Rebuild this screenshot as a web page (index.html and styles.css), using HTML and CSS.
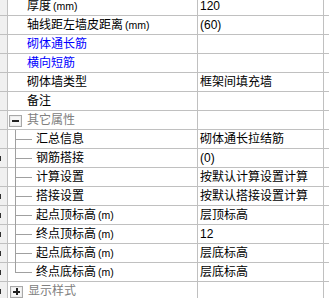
FILE: index.html
```html
<!DOCTYPE html>
<html lang="zh">
<head>
<meta charset="utf-8">
<link rel="stylesheet" href="styles.css">
</head>
<body>
<div class="grid">
  <div class="row first"><div class="strip"></div><div class="name">厚度<span class="unit">(mm)</span></div><div class="val">120</div><div class="tail"></div></div>
  <div class="row"><div class="strip"></div><div class="name">轴线距左墙皮距离<span class="unit">(mm)</span></div><div class="val">(60)</div><div class="tail"></div></div>
  <div class="row"><div class="strip"></div><div class="name blue">砌体通长筋</div><div class="val"></div><div class="tail"></div></div>
  <div class="row"><div class="strip"></div><div class="name blue">横向短筋</div><div class="val"></div><div class="tail"></div></div>
  <div class="row"><div class="strip"></div><div class="name">砌体墙类型</div><div class="val">框架间填充墙</div><div class="tail"></div></div>
  <div class="row"><div class="strip"></div><div class="name">备注</div><div class="val"></div><div class="tail"></div></div>
  <div class="row"><div class="strip"></div><div class="name group"><span class="box"><span class="minus"></span></span><span class="gtext">其它属性</span></div><div class="val"></div><div class="tail"></div></div>
  <div class="row"><div class="strip"></div><div class="name child"><span class="branch"><span class="up"></span><span class="down"></span></span>汇总信息</div><div class="val">砌体通长拉结筋</div><div class="tail"></div></div>
  <div class="row"><div class="strip"><span class="mk"></span></div><div class="name child"><span class="branch"><span class="up"></span><span class="down"></span></span>钢筋搭接</div><div class="val">(0)</div><div class="tail"></div></div>
  <div class="row"><div class="strip"></div><div class="name child"><span class="branch"><span class="up"></span><span class="down"></span></span>计算设置</div><div class="val">按默认计算设置计算</div><div class="tail"></div></div>
  <div class="row"><div class="strip"><span class="mk"></span></div><div class="name child"><span class="branch"><span class="up"></span><span class="down"></span></span>搭接设置</div><div class="val">按默认搭接设置计算</div><div class="tail"></div></div>
  <div class="row"><div class="strip"><span class="mk"></span></div><div class="name child"><span class="branch"><span class="up"></span><span class="down"></span></span>起点顶标高<span class="unit">(m)</span></div><div class="val">层顶标高</div><div class="tail"></div></div>
  <div class="row"><div class="strip"><span class="mk"></span></div><div class="name child"><span class="branch"><span class="up"></span><span class="down"></span></span>终点顶标高<span class="unit">(m)</span></div><div class="val">12</div><div class="tail"></div></div>
  <div class="row"><div class="strip"><span class="mk"></span></div><div class="name child"><span class="branch"><span class="up"></span><span class="down"></span></span>起点底标高<span class="unit">(m)</span></div><div class="val">层底标高</div><div class="tail"></div></div>
  <div class="row"><div class="strip"><span class="mk"></span></div><div class="name child"><span class="branch"><span class="up"></span><span class="down last"></span></span>终点底标高<span class="unit">(m)</span></div><div class="val">层底标高</div><div class="tail"></div></div>
  <div class="row"><div class="strip"><span class="mk"></span></div><div class="name group plusrow"><span class="box"><span class="minus"></span><span class="vbar"></span></span><span class="gtext">显示样式</span></div><div class="val"></div><div class="tail"></div></div>
</div>
</body>
</html>
```
FILE: styles.css
```css
html, body {
  margin: 0;
  padding: 0;
  background: #ffffff;
}
body {
  width: 329px;
  height: 298px;
  overflow: hidden;
  font-family: "Liberation Sans", "Noto Sans CJK SC", sans-serif;
  font-size: 12px;
  color: #000000;
}
.grid {
  display: flex;
  flex-direction: column;
  margin-top: -3px;
}
.row {
  display: flex;
  height: 18px;
  border-bottom: 1px solid #c0c0c0;
}
.strip {
  width: 7px;
  background: #f0f0f0;
  border-right: 1px solid #c0c0c0;
  display: flex;
  align-items: center;
}
.mk {
  width: 1px;
  height: 5px;
  background: #303030;
}
.name {
  width: 170px;
  padding-left: 19px;
  border-right: 1px solid #c0c0c0;
  display: flex;
  align-items: center;
  line-height: 18px;
  white-space: nowrap;
  overflow: hidden;
}
.unit {
  font-size: 10.5px;
  margin-left: 2px;
}
.blue { color: #0000ff; }
.val {
  width: 123px;
  padding-left: 2px;
  border-right: 1px solid #c0c0c0;
  display: flex;
  align-items: center;
  line-height: 18px;
  white-space: nowrap;
  overflow: hidden;
}
.tail {
  flex: 1;
}
.group {
  padding-left: 1px;
  width: 188px;
  color: #808080;
}
.plusrow {
  padding-left: 2px;
  width: 187px;
}
.box {
  width: 11px;
  height: 10px;
  border: 1px solid #a8a8a8;
  box-shadow: inset 0 0 0 1px #ececec;
  background: #f6f6f6;
  display: flex;
  align-items: center;
  justify-content: center;
  margin-right: 5px;
  margin-top: 1px;
}
.minus {
  width: 7px;
  height: 2px;
  background: #202020;
}
.vbar {
  width: 2px;
  height: 7px;
  background: #202020;
  margin-left: -4.5px;
  margin-right: 2.5px;
}
.gtext {
  color: #808080;
}
.child {
  padding-left: 7px;
  width: 182px;
  overflow: visible;
}
.branch {
  display: flex;
  flex-direction: column;
  width: 17px;
  height: 19px;
  margin-right: 4px;
  align-self: flex-start;
}
.up {
  height: 9px;
  border-left: 1px solid #a0a0a0;
  border-bottom: 1px solid #a0a0a0;
}
.down {
  flex: 1;
  border-left: 1px solid #a0a0a0;
}
.down.last {
  border-left-color: transparent;
}
```
